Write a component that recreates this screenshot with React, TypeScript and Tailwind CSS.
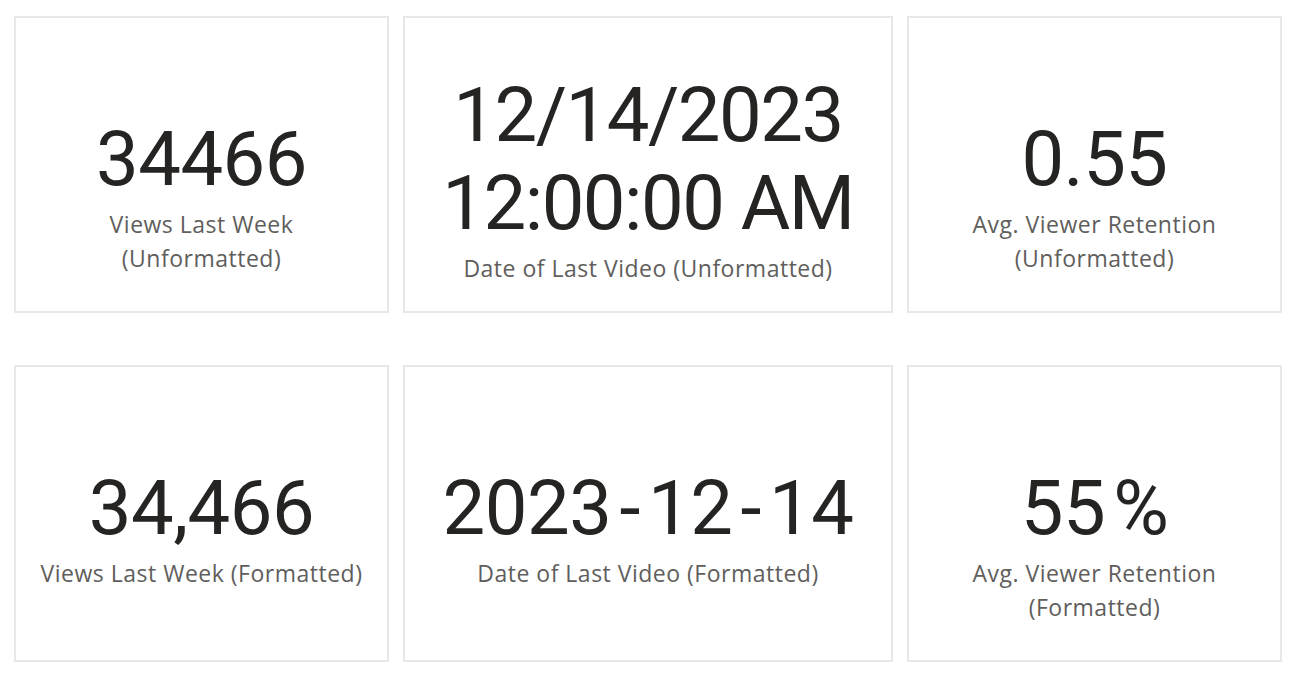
import type { ReactNode } from "react";

const cards: { value: ReactNode[]; label: string[]; top: string; tight?: boolean }[] = [
  { value: ["34466"], label: ["Views Last Week", "(Unformatted)"], top: "pt-[97px]" },
  {
    value: ["12/14/2023", "12:00:00 AM"],
    label: ["Date of Last Video (Unformatted)"],
    top: "pt-[53px]",
    tight: true,
  },
  { value: ["0.55"], label: ["Avg. Viewer Retention", "(Unformatted)"], top: "pt-[97px]" },
  { value: ["34,466"], label: ["Views Last Week (Formatted)"], top: "pt-[97px]" },
  {
    value: [
      <>
        2023<span className="mx-[8px]">-</span>12<span className="mx-[8px]">-</span>14
      </>,
    ],
    label: ["Date of Last Video (Formatted)"],
    top: "pt-[97px]",
  },
  {
    value: [
      <>
        55<span className="ml-[8px]">%</span>
      </>,
    ],
    label: ["Avg. Viewer Retention", "(Formatted)"],
    top: "pt-[97px]",
  },
];

function Card({ value, label, top, tight }: { value: ReactNode[]; label: string[]; top: string; tight?: boolean }) {
  return (
    <div className={`flex h-[297px] flex-col items-center border-2 border-[#e8e8e8] bg-white text-center ${top}`}>
      <div
        className={`font-['Roboto',sans-serif] text-[76px] leading-[88px] text-[#252423] ${
          tight ? "tracking-[-1.5px]" : "tracking-[-0.5px]"
        }`}
      >
        {value.map((v, i) => (
          <div key={i} className="whitespace-nowrap">{v}</div>
        ))}
      </div>
      <div className="mt-1 font-['Open_Sans',sans-serif] text-[23px] leading-[34px] tracking-[0.5px] text-[#605e5c]">
        {label.map((l) => (
          <div key={l} className="whitespace-nowrap">{l}</div>
        ))}
      </div>
    </div>
  );
}

export default function App() {
  return (
    <div className="min-h-[676px] bg-white px-[14px] pt-[16px]">
      <div className="grid grid-cols-[375px_490px_375px] gap-x-[14px] gap-y-[52px]">
        {cards.map((c, i) => (
          <Card key={i} {...c} />
        ))}
      </div>
    </div>
  );
}
